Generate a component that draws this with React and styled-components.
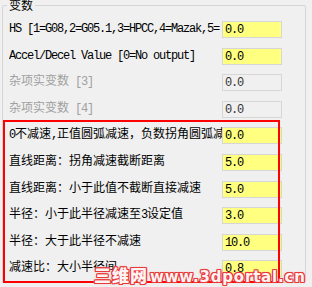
import React from "react";
import styled, { createGlobalStyle } from "styled-components";

const Global = createGlobalStyle`
  html, body {
    margin: 0;
    padding: 0;
    background: #f0f0f0;
  }
  body {
    font-family: "Liberation Mono", "Noto Sans CJK SC", monospace;
    font-size: 12px;
    color: #000;
  }
`;

const Page = styled.div`
  position: relative;
  width: 312px;
  height: 287px;
  overflow: hidden;
  background: #f0f0f0;
  padding: 5px 6px 0 2px;
  box-sizing: border-box;
`;

/* group box ("变数") */
const Group = styled.div`
  position: relative;
  height: 278px;
  border: 1px solid #d5d5d5;
  border-radius: 2px;
  box-sizing: border-box;
  padding: 15px 0 0 6px;
`;

const Legend = styled.span`
  position: absolute;
  top: -8px;
  left: 4px;
  padding: 0 2px;
  background: #f0f0f0;
  font-family: "Noto Sans CJK SC", sans-serif;
  font-size: 12px;
  line-height: 14px;
`;

const List = styled.div`
  display: flex;
  flex-direction: column;
  gap: 9.6px;
`;

const Row = styled.div`
  display: flex;
  align-items: center;
  height: 17px;
`;

const Label = styled.div`
  width: 213px;
  flex: none;
  overflow: hidden;
  white-space: nowrap;
  line-height: 17px;
  color: ${(p) => (p.$disabled ? "#a0a0a0" : "#000")};
`;

const Lat = styled.span`
  font-family: "Liberation Mono", monospace;
  letter-spacing: -1.2px;
`;

const Field = styled.div`
  width: 60px;
  height: 17px;
  flex: none;
  box-sizing: border-box;
  border: 1px solid #d6d6d6;
  background: ${(p) => (p.$disabled ? "#f0f0f0" : "#ffff80")};
  color: ${(p) => (p.$disabled ? "#333" : "#000")};
  padding: 0 0 0 2px;
  line-height: 16px;
  font-family: "Liberation Mono", monospace;
  letter-spacing: -1.2px;
  overflow: hidden;
`;

/* annotation overlays */
const RedBox = styled.div`
  position: absolute;
  left: 3px;
  top: 120px;
  width: 277px;
  height: 163px;
  box-sizing: border-box;
  border: 2px solid #f00;
  pointer-events: none;
`;

const Watermark = styled.div`
  position: absolute;
  left: 94px;
  top: 262px;
  display: flex;
  align-items: baseline;
  gap: 2px;
  font-family: "DejaVu Sans", sans-serif;
  font-weight: bold;
  color: #fff4f4;
  text-shadow: 1px 0 0 #e83a3a, -1px 0 0 #e83a3a, 0 1px 0 #e83a3a,
    0 -1px 0 #e83a3a, 1px 1px 0 #e83a3a, -1px -1px 0 #e83a3a,
    1px -1px 0 #e83a3a, -1px 1px 0 #e83a3a, 0 0 3px #ff9090;
  pointer-events: none;
`;

const WmCn = styled.span`
  font-family: "Noto Sans CJK SC", sans-serif;
  font-size: 17px;
  font-weight: 900;
  letter-spacing: 1px;
`;

const WmUrl = styled.span`
  font-size: 15px;
  letter-spacing: 0.8px;
`;

const rows = [
  { label: "HS [1=G08,2=G05.1,3=HPCC,4=Mazak,5=", value: "0.0" },
  { label: "Accel/Decel Value [0=No output]", value: "0.0" },
  { label: "杂项实变数 [3]", value: "0.0", disabled: true },
  { label: "杂项实变数 [4]", value: "0.0", disabled: true },
  { label: "0不减速,正值圆弧减速，负数拐角圆弧减速", value: "0.0" },
  { label: "直线距离：拐角减速截断距离", value: "5.0" },
  { label: "直线距离：小于此值不截断直接减速", value: "5.0" },
  { label: "半径：小于此半径减速至3设定值", value: "3.0" },
  { label: "半径：大于此半径不减速", value: "10.0" },
  { label: "减速比：大小半径间", value: "0.8" },
];

// latin runs get the narrow half-width spacing
function mixed(text) {
  return text
    .split(/([\x20-\x7e]+)/)
    .filter(Boolean)
    .map((part, i) =>
      /^[\x20-\x7e]+$/.test(part) ? <Lat key={i}>{part}</Lat> : <span key={i}>{part}</span>
    );
}

export default function App() {
  return (
    <Page>
      <Global />
      <Group>
        <Legend>变数</Legend>
        <List>
          {rows.map((r, i) => (
            <Row key={i}>
              <Label $disabled={r.disabled}>{mixed(r.label)}</Label>
              <Field $disabled={r.disabled}>{r.value}</Field>
            </Row>
          ))}
        </List>
      </Group>
      <RedBox />
      <Watermark>
        <WmCn>三维网</WmCn>
        <WmUrl>www.3dportal.cn</WmUrl>
      </Watermark>
    </Page>
  );
}
